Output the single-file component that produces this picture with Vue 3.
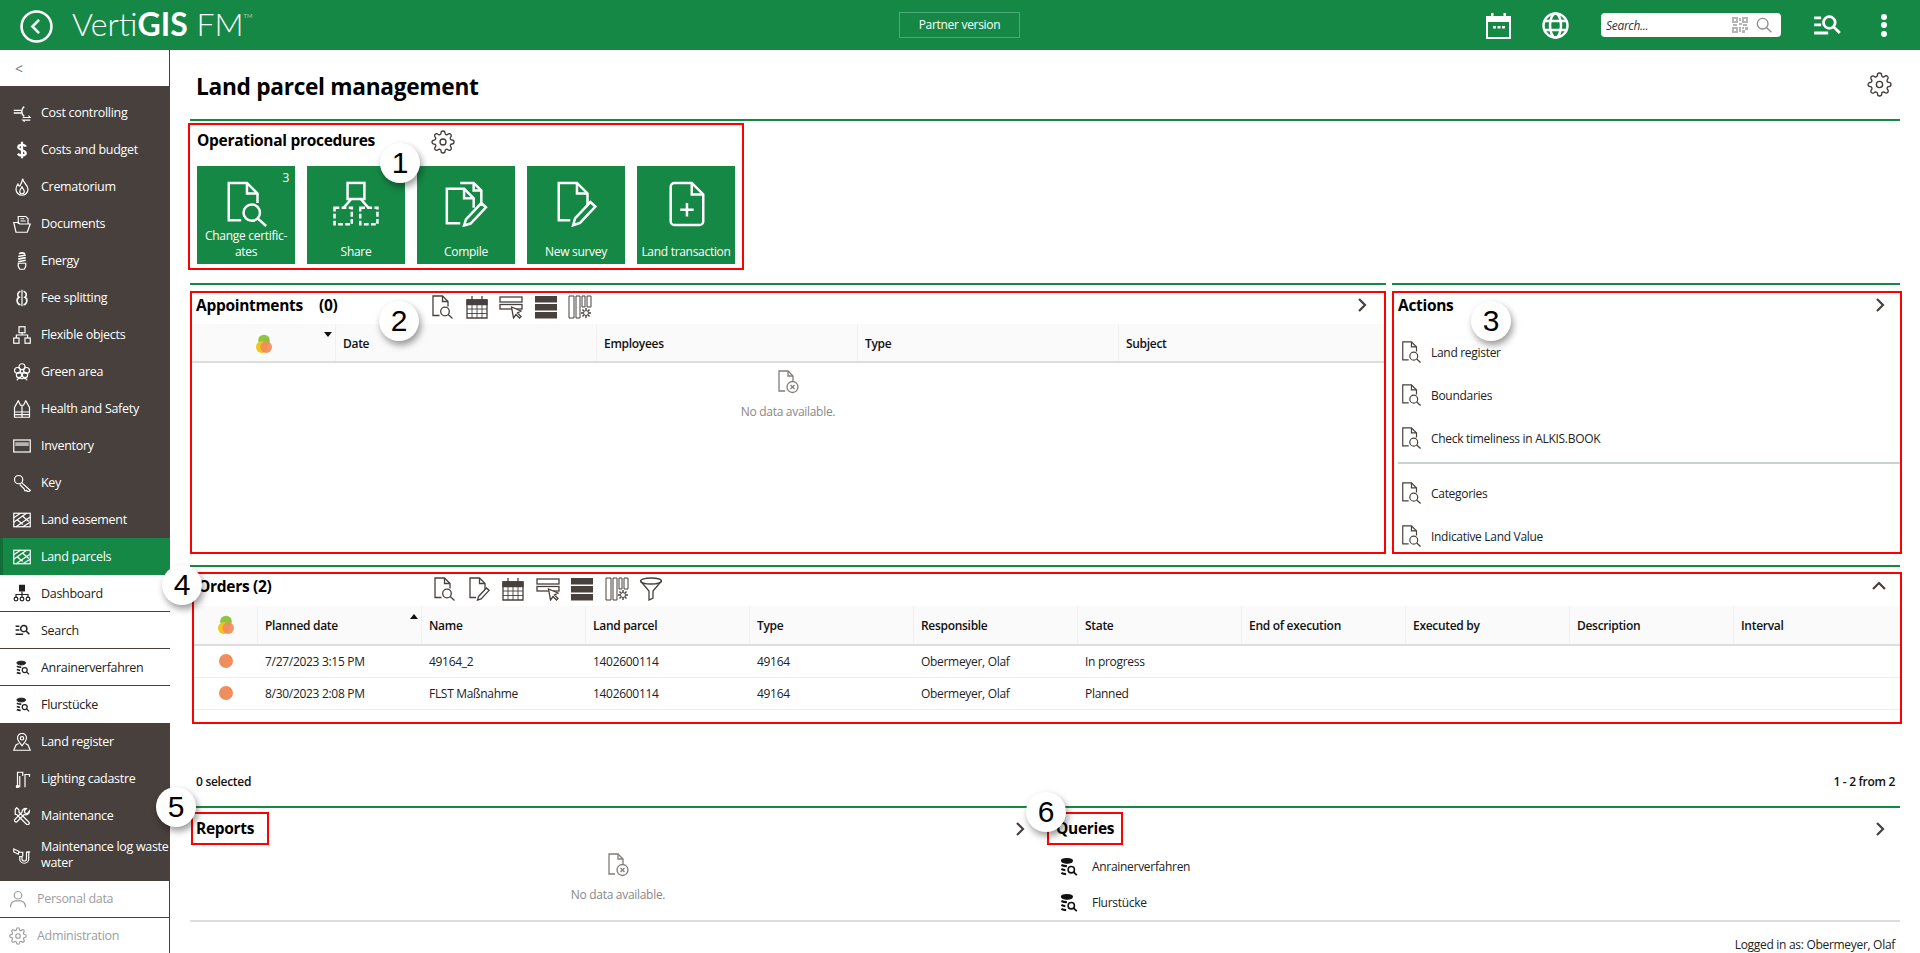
<template>
  <div class="app">
    <svg class="sprite" xmlns="http://www.w3.org/2000/svg">
      <symbol id="i-gear" viewBox="0 0 24 24">
        <circle cx="12" cy="12" r="3" />
        <path d="M19.4 15a1.65 1.65 0 0 0 .33 1.82l.06.06a2 2 0 0 1 0 2.83 2 2 0 0 1-2.83 0l-.06-.06a1.65 1.65 0 0 0-1.82-.33 1.65 1.65 0 0 0-1 1.51V21a2 2 0 0 1-2 2 2 2 0 0 1-2-2v-.09A1.65 1.65 0 0 0 9 19.4a1.65 1.65 0 0 0-1.82.33l-.06.06a2 2 0 0 1-2.83 0 2 2 0 0 1 0-2.83l.06-.06a1.65 1.65 0 0 0 .33-1.82 1.65 1.65 0 0 0-1.51-1H3a2 2 0 0 1-2-2 2 2 0 0 1 2-2h.09A1.65 1.65 0 0 0 4.6 9a1.65 1.65 0 0 0-.33-1.82l-.06-.06a2 2 0 0 1 0-2.83 2 2 0 0 1 2.83 0l.06.06a1.65 1.65 0 0 0 1.82.33H9a1.65 1.65 0 0 0 1-1.51V3a2 2 0 0 1 2-2 2 2 0 0 1 2 2v.09a1.65 1.65 0 0 0 1 1.51 1.65 1.65 0 0 0 1.82-.33l.06-.06a2 2 0 0 1 2.83 0 2 2 0 0 1 0 2.83l-.06.06a1.65 1.65 0 0 0-.33 1.82V9a1.65 1.65 0 0 0 1.51 1H21a2 2 0 0 1 2 2 2 2 0 0 1-2 2h-.09a1.65 1.65 0 0 0-1.51 1z" />
      </symbol>
      <symbol id="i-docsearch" viewBox="0 0 24 24">
        <path d="M9.5 20.5H3V1h9.5l5.5 5.5v5" />
        <path d="M12.5 1v5.5H18" />
        <circle cx="15" cy="16.5" r="4.3" />
        <path d="M18.2 19.6l4.3 3.9" />
      </symbol>
      <symbol id="i-docedit" viewBox="0 0 24 24">
        <path d="M9 20.5H3V1h9.5L18 6.5v6" />
        <path d="M12.5 1v5.5H18" />
        <path d="M11.5 19.5l8-8.5 2.6 2.4-8 8.5-3.6 1.2z" />
      </symbol>
      <symbol id="i-share" viewBox="0 0 24 24">
        <rect x="7.6" y="1" width="8.8" height="8.4" />
        <path d="M9.5 9.400l-4 4.600M14.500 9.400l4 4.600" />
        <rect x="0.8" y="14" width="9" height="8.6" stroke-dasharray="2.5 1.2" />
        <rect x="14.200" y="14" width="9" height="8.6" stroke-dasharray="2.5 1.2" />
      </symbol>
      <symbol id="i-compile" viewBox="0 0 24 24">
        <path d="M9 1h7l4 4v8" />
        <path d="M16 1v4h4" />
        <path d="M9 22H2V4h9l5 5v5" />
        <path d="M11 4v5h5" />
        <path d="M12 20l8-8.5 2.4 2.2-8 8.5-3.4 1z" />
      </symbol>
      <symbol id="i-docplus" viewBox="0 0 24 24">
        <path d="M6 1h9l6 6v14a2 2 0 0 1-2 2H6a2 2 0 0 1-2-2V3a2 2 0 0 1 2-2z" />
        <path d="M15 1v6h6" />
        <path d="M12.5 11.5v7M9 15h7" />
      </symbol>
      <symbol id="i-calendar" viewBox="0 0 24 24">
        <path d="M2 5h20v18H2z" />
        <path d="M7 1v5M17 1v5" />
        <path d="M2 9.5h20M2 14h20M2 18.5h20M7 9.5V23M12 9.5V23M17 9.5V23" stroke-width=".9" />
        <path d="M2 5h20v4.5H2z" fill="currentColor" />
      </symbol>
      <symbol id="i-pick" viewBox="0 0 24 24">
        <rect x="1" y="2" width="22" height="5" />
        <rect x="1" y="9.5" width="22" height="4.5" />
        <path d="M12.5 12l2 11 2.5-3.5 3.5 3.5 1.5-1.5-3.5-3.5 3.5-2z" fill="#fff" />
      </symbol>
      <symbol id="i-rows" viewBox="0 0 24 24">
        <path d="M1 1h22v6.5H1zM1 9h22v6.5H1zM1 17h22v6.5H1z" fill="currentColor" stroke="none" />
      </symbol>
      <symbol id="i-cols" viewBox="0 0 24 24">
        <path d="M1 1h5v22H1zM8 1h4v22H8zM14 1h3v11h-3zM19 1h4v11h-4z" stroke-width="1" />
        <circle cx="18" cy="18" r="2.5" stroke-width="1" />
        <path d="M18 13v2M18 21v2M13 18h2M21 18h2M14.500 14.500l1.400 1.400M20.100 20.100l1.400 1.400M14.500 21.500l1.400-1.400M20.100 15.900l1.400-1.400" stroke-width="1.400" />
      </symbol>
      <symbol id="i-funnel" viewBox="0 0 24 24">
        <ellipse cx="12" cy="4" rx="10.500" ry="3" />
        <path d="M1.500 4L10 14v9l4-2v-7l8.500-10" />
      </symbol>
      <symbol id="i-nodata" viewBox="0 0 24 24">
        <path d="M9 21H3V1h9l5 5v6" />
        <path d="M12 1v5h5" />
        <circle cx="16.500" cy="17" r="5.500" />
        <path d="M14.500 15l4 4M18.500 15l-4 4" />
      </symbol>
      <symbol id="i-cost" viewBox="0 0 24 24">
        <path d="M15 3.500a8 8 0 0 0 0 13M1 8.500h10M1 12h10" stroke-width="1.900" />
        <path d="M13 18h10l-2.500-2.500M23 21.500H13l2.500 2" stroke-width="1.400" />
      </symbol>
      <symbol id="i-dollar" viewBox="0 0 24 24">
        <path d="M17 7.500c-1-3-9.500-3.500-10 .5s10 4 10 8-8 4.500-10.500 1M12 1v22" stroke-width="3" />
      </symbol>
      <symbol id="i-flame" viewBox="0 0 24 24">
        <path d="M13 1c0 5 7 8 7 14a8 8 0 0 1-16 0c0-3 1-5 2.500-7 .5 2 1.500 3 2.500 3 1.500-2.500 3-5.500 4-10z" />
        <path d="M12 11c0 3 3 4 3 7a3 3 0 0 1-6 0c0-3 2.500-4 3-7z" />
      </symbol>
      <symbol id="i-box" viewBox="0 0 24 24">
        <path d="M7 12V2h10l3 3v7" />
        <path d="M10 5h5M10 8h7" />
        <path d="M1 10l3 13h15l4-11H9l-2-2z" />
      </symbol>
      <symbol id="i-bulb" viewBox="0 0 24 24">
        <path d="M8 2.500c3-2 5-2 8 0M7 6l10-2M7 9.500l10-2M7 13l10-2" stroke-width="2.200" />
        <path d="M7 15h10v4l-2 4h-6l-2-4z" />
      </symbol>
      <symbol id="i-fee" viewBox="0 0 24 24">
        <path d="M12 1v22" />
        <path d="M10 3C6 4 5 9 8 11c-4 2-3 9 2 10M14 3c4 1 5 6 2 8 4 2 3 9-2 10" stroke-width="2.200" />
      </symbol>
      <symbol id="i-flex" viewBox="0 0 24 24">
        <rect x="8" y="1" width="8" height="8" />
        <path d="M12 9v3M4.500 16v-4h15v4" />
        <rect x="1" y="16" width="7" height="7" />
        <rect x="16" y="16" width="7" height="7" />
      </symbol>
      <symbol id="i-flower" viewBox="0 0 24 24">
        <circle cx="12" cy="11" r="2.500" />
        <circle cx="12" cy="5" r="4" />
        <circle cx="6" cy="10" r="4" />
        <circle cx="18" cy="10" r="4" />
        <circle cx="8" cy="16" r="3.500" />
        <circle cx="16" cy="16" r="3.500" />
        <path d="M5 23c2-3 5-3 7-2 2-1 5-1 7 2" />
      </symbol>
      <symbol id="i-vest" viewBox="0 0 24 24">
        <path d="M7 1L2 10v13h20V10L17 1l-3 6h-4z" />
        <path d="M12 7v16M2 16h20M2 19.500h20" />
      </symbol>
      <symbol id="i-inventory" viewBox="0 0 24 24">
        <rect x="1" y="4" width="22" height="16" />
        <path d="M3 7h18v5H3z" fill="currentColor" opacity=".6" stroke="none" />
      </symbol>
      <symbol id="i-key" viewBox="0 0 24 24">
        <circle cx="7.500" cy="7.500" r="5.500" />
        <path d="M11.500 11.500L23 22l-3 2-2-2-2 .5-1-2.500-6-6" />
      </symbol>
      <symbol id="i-land" viewBox="0 0 24 24">
        <rect x="1" y="3" width="22" height="18" />
        <path d="M1 9l9-6M1 15L18 3M4 21L23 8M13 21l10-6M6 12l7 6M13 7l8 7" />
      </symbol>
      <symbol id="i-dash" viewBox="0 0 24 24">
        <path d="M8 1h8v9H8z" fill="currentColor" stroke="none" />
        <path d="M12 10v4M4 18v-4h16v4M12 14v4" />
        <circle cx="4" cy="20" r="2.500" />
        <circle cx="12" cy="20" r="2.500" />
        <circle cx="20" cy="20" r="2.500" />
      </symbol>
      <symbol id="i-listsearch" viewBox="0 0 24 24">
        <path d="M1 5h6M1 11h6M1 18h12" stroke-width="2.400" />
        <circle cx="14" cy="9" r="5" stroke-width="2.400" />
        <path d="M18 13l5 5" stroke-width="2.400" />
      </symbol>
      <symbol id="i-query" viewBox="0 0 24 24">
        <path d="M3 4.500C3 1 17 1 17 4.500 17 9 3 9 3 4.500z" fill="currentColor" stroke="currentColor" />
        <path d="M3 10c2 1 5 1.500 7 1.500M3 15c1.500 1 3.500 1.500 5 1.500M3 20c1.500 1 3.500 1.500 6 1.500" stroke-width="2.800" />
        <circle cx="15.500" cy="16" r="4" stroke-width="2" />
        <path d="M18.500 19l4 4" stroke-width="2.200" />
      </symbol>
      <symbol id="i-register" viewBox="0 0 24 24">
        <path d="M12 17c-3-4-6-7-6-10.500a6 6 0 0 1 12 0c0 3.500-3 6.500-6 10.500z" />
        <circle cx="12" cy="7" r="2.300" />
        <path d="M7.500 14L4 16l-3 7h22l-3-7-3.500-2" />
      </symbol>
      <symbol id="i-lamp" viewBox="0 0 24 24">
        <path d="M6 23V3h7v5M16 23V6h6v3M9 23V8" />
        <circle cx="6" cy="22" r="1.500" />
      </symbol>
      <symbol id="i-tools" viewBox="0 0 24 24">
        <path d="M3 3l2-2 3 3v3l13 13a2 2 0 0 1-3 3L5 10H3z" />
        <path d="M22 5a5 5 0 0 1-7 5L5 20a2.500 2.500 0 0 1-3-3l10-10a5 5 0 0 1 6-5l-3 3 1 3 3 1z" />
      </symbol>
      <symbol id="i-pipe" viewBox="0 0 24 24">
        <path d="M1 4l7 3-1 4-6-3zM21 8v9a6 6 0 0 1-12 0v-3h3v3a3 3 0 0 0 6 0V8zM8 8l5 .5v5" />
        <path d="M19 8h4" />
      </symbol>
      <symbol id="i-person" viewBox="0 0 24 24">
        <circle cx="12" cy="7" r="5" />
        <path d="M2 23c0-6 4-8 6-8.500h8c2 .5 6 2.500 6 8.500" />
      </symbol>
      <symbol id="i-searchmag" viewBox="0 0 24 24">
        <circle cx="10" cy="10" r="8" />
        <path d="M16 16l7 7" />
      </symbol>
    </svg>

    <header class="topbar">
      <div class="brand">
        <svg class="back" viewBox="0 0 32 32">
          <circle cx="16" cy="16" r="14.5" />
          <path d="M18.5 9.500L12 16l6.500 6.500" />
        </svg>
        <span class="logo">Verti<b>GIS</b> FM<sup>TM</sup></span>
      </div>
      <div class="partner">Partner version</div>
      <div class="top-tools">
        <svg class="top-cal" viewBox="0 0 25 27">
          <path d="M1 5h23v21H1z" fill="none" stroke="#fff" stroke-width="2" />
          <path d="M1 5h23v5H1zM5 1h2.500v5H5zM17.500 1H20v5h-2.500zM7 14h3v2.500H7zM11.500 14h3v2.500h-3zM16 14h3v2.500h-3z" fill="#fff" />
        </svg>
        <svg class="top-globe" viewBox="0 0 27 27">
          <circle cx="13.5" cy="13.5" r="12" />
          <ellipse cx="13.5" cy="13.5" rx="5.5" ry="12" />
          <path d="M2.500 9h22M2.500 18h22" />
        </svg>
        <div class="searchbox">
          <span>Search...</span>
          <svg class="qr" viewBox="0 0 16 16">
            <path d="M0 0h6v6H0zM10 0h6v6h-6zM0 10h6v6H0z" fill="#b5b5b5" />
            <path d="M2 2h2v2H2zM12 2h2v2h-2zM2 12h2v2H2z" fill="#fff" />
            <path d="M7 1h2v3H7zM7 6h3v2H7zM1 7h4v2H1zM11 7h4v2h-4zM7 10h2v5H7zM10 10h2v2h-2zM13 10h3v3h-3zM10 13h3v3h-3z" fill="#b5b5b5" />
          </svg>
          <svg class="ic mag"><use href="#i-searchmag" /></svg>
        </div>
        <svg class="ic top-list"><use href="#i-listsearch" /></svg>
        <div class="kebab"><i></i><i></i><i></i></div>
      </div>
    </header>

    <div class="body">
      <aside class="sidebar">
        <div class="collapse">&lt;</div>
        <div class="nav">
          <div v-for="item in navItems" :key="item.label" class="nav-item" :class="item.kind">
            <span class="nav-icon-box">
              <svg class="ic nav-ic" :class="'nav-' + item.icon"><use :href="'#i-' + item.icon" /></svg>
            </span>
            <span>{{ item.label }}</span>
          </div>
        </div>
        <div v-for="item in bottomNav" :key="item.label" class="nav-bottom">
          <svg class="ic nav-ic"><use :href="'#i-' + item.icon" /></svg>
          <span>{{ item.label }}</span>
        </div>
      </aside>

      <main class="content">
        <div class="title-row">
          <h1>Land parcel management</h1>
          <svg class="ic gear-big"><use href="#i-gear" /></svg>
        </div>
        <div class="green-line"></div>

        <section class="red procedures">
          <div class="proc-head">
            <h2>Operational procedures</h2>
            <svg class="ic gear"><use href="#i-gear" /></svg>
          </div>
          <div class="tiles">
            <div v-for="tile in tiles" :key="tile.label" class="tile">
              <span v-if="tile.count" class="count">{{ tile.count }}</span>
              <svg class="ic tile-ic"><use :href="'#i-' + tile.icon" /></svg>
              <div class="tile-label">{{ tile.label }}</div>
            </div>
          </div>
          <div class="badge b1">1</div>
        </section>

        <div class="two-col">
          <div class="col-left">
            <div class="green-line"></div>
            <section class="red appointments">
              <div class="sec-head">
                <h2 class="sec-title">Appointments<span class="num">(0)</span></h2>
                <div class="toolbar">
                  <svg v-for="t in apptTools" :key="t" class="ic tool"><use :href="'#i-' + t" /></svg>
                </div>
                <svg class="chev" viewBox="0 0 10 16"><path d="M2 2l6 6-6 6" /></svg>
              </div>
              <div class="grid appt-grid grid-head">
                <div class="cell center">
                  <svg class="traffic" viewBox="0 0 18 22">
                    <circle cx="9" cy="7" r="6.5" fill="#8fc442" />
                    <circle cx="6.5" cy="14.5" r="6.5" fill="#f3c322" />
                    <circle cx="11.5" cy="14.5" r="6.5" fill="#ef8d5c" opacity=".92" />
                  </svg>
                  <i class="sort down"></i>
                </div>
                <div v-for="h in apptCols" :key="h" class="cell">{{ h }}</div>
              </div>
              <div class="nodata appt-empty">
                <svg class="ic nodata-ic"><use href="#i-nodata" /></svg>
                <span>No data available.</span>
              </div>
              <div class="badge b2">2</div>
            </section>
          </div>
          <div class="col-right">
            <div class="green-line"></div>
            <section class="red actions">
              <div class="sec-head">
                <h2 class="act-title">Actions</h2>
                <svg class="chev" viewBox="0 0 10 16"><path d="M2 2l6 6-6 6" /></svg>
              </div>
              <div class="act-list first">
                <div v-for="a in actionsTop" :key="a" class="act-row">
                  <svg class="ic act-ic"><use href="#i-docsearch" /></svg>
                  <span>{{ a }}</span>
                </div>
              </div>
              <div class="act-divider"></div>
              <div class="act-list">
                <div v-for="a in actionsBottom" :key="a" class="act-row">
                  <svg class="ic act-ic"><use href="#i-docsearch" /></svg>
                  <span>{{ a }}</span>
                </div>
              </div>
              <div class="badge b3">3</div>
            </section>
          </div>
        </div>

        <div class="green-line orders-line"></div>
        <section class="red orders">
          <div class="sec-head">
            <h2 class="sec-title">Orders (2)</h2>
            <div class="toolbar">
              <svg v-for="t in orderTools" :key="t" class="ic tool"><use :href="'#i-' + t" /></svg>
            </div>
            <svg class="chev up" viewBox="0 0 16 10"><path d="M2 8l6-6 6 6" /></svg>
          </div>
          <div class="grid order-grid grid-head">
            <div class="cell center">
              <svg class="traffic" viewBox="0 0 18 22">
                <circle cx="9" cy="7" r="6.5" fill="#8fc442" />
                <circle cx="6.5" cy="14.5" r="6.5" fill="#f3c322" />
                <circle cx="11.5" cy="14.5" r="6.5" fill="#ef8d5c" opacity=".92" />
              </svg>
            </div>
            <div v-for="(h, i) in orderCols" :key="h" class="cell">
              {{ h }}<i v-if="i === 0" class="sort"></i>
            </div>
          </div>
          <div v-for="row in orders" :key="row.name" class="grid order-grid order-row">
            <div class="cell center"><span class="dot"></span></div>
            <div class="cell">{{ row.date }}</div>
            <div class="cell">{{ row.name }}</div>
            <div class="cell">{{ row.parcel }}</div>
            <div class="cell">{{ row.type }}</div>
            <div class="cell">{{ row.resp }}</div>
            <div class="cell">{{ row.state }}</div>
            <div class="cell"></div>
            <div class="cell"></div>
            <div class="cell"></div>
            <div class="cell"></div>
          </div>
          <div class="badge b4">4</div>
        </section>

        <div class="selected-row">
          <span>0 selected</span>
          <span class="paging">1 - 2 from 2</span>
        </div>
        <div class="green-line"></div>

        <div class="bottom-row">
          <section class="reports">
            <div class="bottom-head">
              <h2 class="red mini">Reports</h2>
              <svg class="chev" viewBox="0 0 10 16"><path d="M2 2l6 6-6 6" /></svg>
            </div>
            <div class="nodata reports-empty">
              <svg class="ic nodata-ic"><use href="#i-nodata" /></svg>
              <span>No data available.</span>
            </div>
            <div class="badge b5">5</div>
          </section>
          <section class="queries">
            <div class="bottom-head">
              <h2 class="red mini">Queries</h2>
              <svg class="chev" viewBox="0 0 10 16"><path d="M2 2l6 6-6 6" /></svg>
            </div>
            <div v-for="q in queries" :key="q" class="query-row">
              <svg class="ic query-ic"><use href="#i-query" /></svg>
              <span>{{ q }}</span>
            </div>
            <div class="badge b6">6</div>
          </section>
        </div>
        <div class="grey-line"></div>
        <div class="logged">Logged in as: Obermeyer, Olaf</div>
      </main>
    </div>
  </div>
</template>

<script setup>
const navItems = [
  { label: "Cost controlling", icon: "cost", kind: "dark" },
  { label: "Costs and budget", icon: "dollar", kind: "dark" },
  { label: "Crematorium", icon: "flame", kind: "dark" },
  { label: "Documents", icon: "box", kind: "dark" },
  { label: "Energy", icon: "bulb", kind: "dark" },
  { label: "Fee splitting", icon: "fee", kind: "dark" },
  { label: "Flexible objects", icon: "flex", kind: "dark" },
  { label: "Green area", icon: "flower", kind: "dark" },
  { label: "Health and Safety", icon: "vest", kind: "dark" },
  { label: "Inventory", icon: "inventory", kind: "dark" },
  { label: "Key", icon: "key", kind: "dark" },
  { label: "Land easement", icon: "land", kind: "dark" },
  { label: "Land parcels", icon: "land", kind: "active" },
  { label: "Dashboard", icon: "dash", kind: "light" },
  { label: "Search", icon: "listsearch", kind: "light" },
  { label: "Anrainerverfahren", icon: "query", kind: "light" },
  { label: "Flurstücke", icon: "query", kind: "light last" },
  { label: "Land register", icon: "register", kind: "dark" },
  { label: "Lighting cadastre", icon: "lamp", kind: "dark" },
  { label: "Maintenance", icon: "tools", kind: "dark" },
  { label: "Maintenance log waste water", icon: "pipe", kind: "dark tall" }
];

const bottomNav = [
  { label: "Personal data", icon: "person" },
  { label: "Administration", icon: "gear" }
];

const tiles = [
  { label: "Change certific- ates", icon: "docsearch", count: 3 },
  { label: "Share", icon: "share" },
  { label: "Compile", icon: "compile" },
  { label: "New survey", icon: "docedit" },
  { label: "Land transaction", icon: "docplus" }
];

const apptTools = ["docsearch", "calendar", "pick", "rows", "cols"];
const orderTools = ["docsearch", "docedit", "calendar", "pick", "rows", "cols", "funnel"];
const apptCols = ["Date", "Employees", "Type", "Subject"];
const orderCols = [
  "Planned date",
  "Name",
  "Land parcel",
  "Type",
  "Responsible",
  "State",
  "End of execution",
  "Executed by",
  "Description",
  "Interval"
];
const orders = [
  { date: "7/27/2023 3:15 PM", name: "49164_2", parcel: "1402600114", type: "49164", resp: "Obermeyer, Olaf", state: "In progress" },
  { date: "8/30/2023 2:08 PM", name: "FLST Maßnahme", parcel: "1402600114", type: "49164", resp: "Obermeyer, Olaf", state: "Planned" }
];
const actionsTop = ["Land register", "Boundaries", "Check timeliness in ALKIS.BOOK"];
const actionsBottom = ["Categories", "Indicative Land Value"];
const queries = ["Anrainerverfahren", "Flurstücke"];
</script>

<style>
html, body {
  margin: 0;
  background: #fff;
}
</style>

<style scoped>
.app {
  width: 1920px;
  height: 953px;
  overflow: hidden;
  font-family: "Open Sans", "Noto Sans", sans-serif;
  font-size: 12px;
  letter-spacing: -0.3px;
  color: #222;
  background: #fff;
}
.sprite {
  display: none;
}
.ic {
  fill: none;
  stroke: currentColor;
  stroke-width: 1.3;
  flex: none;
}

.topbar {
  height: 50px;
  background: #168845;
  color: #fff;
  display: flex;
  align-items: center;
  position: relative;
}
.brand {
  display: flex;
  align-items: center;
  width: 899px;
  padding-left: 20px;
  box-sizing: border-box;
}
.back {
  width: 33px;
  height: 33px;
  fill: none;
  stroke: #fff;
  stroke-width: 2.5;
  margin-top: 2px;
}
.logo {
  font-family: "Lato", sans-serif;
  font-weight: 300;
  font-size: 32px;
  letter-spacing: 0;
  margin-left: 19px;
  margin-top: -4px;
  white-space: nowrap;
}
.logo b {
  font-weight: 700;
}
.logo sup {
  font-size: 6px;
  vertical-align: 18px;
  line-height: 0;
}
.partner {
  width: 121px;
  height: 26px;
  line-height: 24px;
  box-sizing: border-box;
  border: 1px solid #4aa878;
  text-align: center;
  font-size: 12px;
}
.top-tools {
  display: flex;
  align-items: center;
  margin-left: 466px;
}
.top-cal {
  width: 25px;
  height: 27px;
}
.top-globe {
  width: 27px;
  height: 27px;
  margin-left: 31px;
  fill: none;
  stroke: #fff;
  stroke-width: 2.5;
}
.searchbox {
  width: 180px;
  height: 24px;
  margin-left: 32px;
  background: #fff;
  border-radius: 4px;
  display: flex;
  align-items: center;
  color: #333;
  font-style: italic;
  font-size: 12px;
  padding-left: 5px;
  box-sizing: border-box;
}
.searchbox span {
  flex: 1;
}
.qr {
  width: 16px;
  height: 16px;
}
.mag {
  width: 16px;
  height: 16px;
  margin: 0 9px 0 8px;
  color: #8c8c8c;
  stroke-width: 2;
}
.top-list {
  width: 28px;
  height: 28px;
  margin-left: 32px;
  margin-top: 2px;
}
.kebab {
  display: flex;
  flex-direction: column;
  gap: 2.5px;
  margin-left: 40px;
}
.kebab i {
  width: 6px;
  height: 6px;
  border-radius: 50%;
  background: #fff;
}

.body {
  display: flex;
  height: 903px;
}
.sidebar {
  width: 170px;
  flex: none;
  box-sizing: border-box;
  border-right: 1px solid #47403c;
}
.collapse {
  height: 36px;
  line-height: 38px;
  padding-left: 15px;
  color: #777;
  font-size: 14px;
}
.nav {
  background: #47403c;
  padding-top: 8px;
  margin-right: -1px;
}
.nav-item {
  height: 37px;
  display: flex;
  align-items: center;
  gap: 10px;
  padding-left: 13px;
  box-sizing: border-box;
  color: #fff;
  font-size: 12.5px;
}
.nav-item.tall {
  height: 47px;
  line-height: 16px;
  padding-bottom: 6px;
}
.nav-item.active {
  background: #168845;
  border-left: 3px solid #0f6f37;
  padding-left: 10px;
}
.nav-item.light {
  background: #fff;
  color: #222;
  border-bottom: 1px solid #47403c;
}
.nav-item.light.last {
  border-bottom: none;
}
.nav-icon-box {
  width: 18px;
  height: 18px;
  flex: none;
  display: flex;
  align-items: center;
  justify-content: center;
}
.nav-ic {
  width: 18px;
  height: 18px;
  stroke-width: 1.6;
}
.nav-ic.nav-listsearch {
  width: 15px;
  height: 15px;
}
.nav-ic.nav-query {
  width: 15px;
  height: 15px;
}
.nav-bottom {
  height: 36.5px;
  display: flex;
  align-items: center;
  gap: 10px;
  padding-left: 9px;
  box-sizing: border-box;
  color: #9d9d9d;
  font-size: 12.5px;
  border-bottom: 1px solid #47403c;
}
.nav-bottom:last-child {
  border-bottom: none;
}
.nav-bottom .nav-ic {
  width: 18px;
  height: 18px;
}

.content {
  flex: 1;
  padding: 0 20px;
  min-width: 0;
}
.title-row {
  height: 69px;
  display: flex;
  align-items: center;
  justify-content: space-between;
  padding-left: 6px;
}
h1 {
  margin: 0 0 -3px;
  font-size: 22.7px;
  font-weight: 700;
  color: #000;
}
h2 {
  margin: 0;
  font-size: 15.5px;
  font-weight: 700;
  color: #000;
}
.gear-big {
  width: 25px;
  height: 25px;
  margin: 0 8px 0 0;
  color: #3f3a37;
}
.green-line {
  height: 2px;
  background: #168845;
}
.red {
  border: 2px solid #f00;
  box-sizing: border-box;
  position: relative;
}
.procedures {
  width: 556px;
  height: 147px;
  margin: 2px 0 13px -2px;
}
.proc-head {
  height: 41px;
  display: flex;
  align-items: center;
}
.proc-head h2 {
  width: 241px;
  padding-left: 7px;
  box-sizing: border-box;
  margin-top: -11px;
}
.gear {
  width: 24px;
  height: 24px;
  color: #3f3a37;
  margin-top: -8px;
}
.tiles {
  display: flex;
  gap: 12px;
  padding-left: 7px;
}
.tile {
  width: 98px;
  height: 98px;
  background: #168845;
  color: #fff;
  position: relative;
  display: flex;
  flex-direction: column;
  align-items: center;
  padding: 15px 0 4px;
  box-sizing: border-box;
}
.count {
  position: absolute;
  top: 3px;
  right: 6px;
  font-size: 12px;
}
.tile-ic {
  width: 46px;
  height: 46px;
}
.tile-label {
  margin-top: auto;
  line-height: 16px;
  text-align: center;
  font-size: 12px;
  width: 92px;
}

.two-col {
  display: flex;
  gap: 6px;
}
.col-left {
  width: 1196px;
  flex: none;
}
.col-right {
  flex: 1;
  min-width: 0;
}
.appointments,
.actions {
  height: 263px;
  margin-top: 6px;
}
.actions {
  margin-right: -2px;
}
.sec-head {
  display: flex;
  align-items: center;
  height: 31px;
  padding-bottom: 8px;
  box-sizing: border-box;
}
.sec-title {
  width: 238px;
  flex: none;
  padding-left: 4px;
  box-sizing: border-box;
}
.num {
  margin-left: 16px;
}
.act-title {
  padding-left: 4px;
  flex: 1;
}
.toolbar {
  display: flex;
  gap: 10.5px;
  flex: 1;
  color: #47403c;
  margin-top: 5px;
}
.tool {
  width: 24px;
  height: 24px;
}
.chev {
  width: 10px;
  height: 16px;
  fill: none;
  stroke: #47403c;
  stroke-width: 2.2;
  margin-right: 17px;
  flex: none;
}
.actions .chev {
  margin-right: 15px;
}
.chev.up {
  width: 16px;
  height: 10px;
  margin-right: 13px;
}
.grid {
  display: grid;
}
.appt-grid {
  grid-template-columns: 143px 261px 261px 261px 1fr;
}
.order-grid {
  grid-template-columns: 63px repeat(9, 164px) 1fr;
}
.grid-head {
  background: #fafafa;
  border-bottom: 2px solid #ddd;
  font-weight: 600;
  color: #111;
}
.appt-grid.grid-head {
  height: 37px;
}
.order-grid.grid-head {
  height: 38px;
}
.cell {
  display: flex;
  align-items: center;
  padding-left: 7px;
  position: relative;
  border-left: 1px solid #f0f0f0;
  white-space: nowrap;
}
.grid-head .cell:first-child {
  border-left: none;
}
.appt-grid .cell {
  padding-top: 2px;
}
.cell.center {
  justify-content: center;
  padding-left: 0;
}
.traffic {
  width: 16px;
  height: 20px;
}
.sort {
  position: absolute;
  right: 3px;
  top: 8px;
  width: 0;
  height: 0;
  border-left: 4px solid transparent;
  border-right: 4px solid transparent;
  border-bottom: 5px solid #111;
}
.sort.down {
  border-bottom: none;
  border-top: 5px solid #111;
}
.order-row {
  height: 32px;
  border-bottom: 1px solid #eee;
  box-sizing: border-box;
}
.order-row .cell {
  border-left: none;
  padding-left: 8px;
  padding-bottom: 1px;
}
.order-row .cell.center {
  padding-left: 0;
}
.dot {
  width: 14px;
  height: 14px;
  border-radius: 50%;
  background: #f08d5c;
}
.nodata {
  display: flex;
  flex-direction: column;
  align-items: center;
  color: #888;
}
.nodata-ic {
  width: 24px;
  height: 24px;
  color: #807c7a;
}
.nodata span {
  margin-top: 9px;
}
.appt-empty {
  padding: 7px 0 0 0;
  width: 1192px;
}

.act-list {
  display: flex;
  flex-direction: column;
  gap: 11px;
}
.act-list.first {
  margin-top: 12px;
}
.act-row {
  height: 32px;
  display: flex;
  align-items: center;
  gap: 9px;
  padding-left: 6px;
}
.act-ic {
  width: 22px;
  height: 24px;
  color: #47403c;
}
.act-divider {
  height: 2px;
  background: #c9d1d1;
  margin: 8px 0 13px 4px;
}

.orders-line {
  margin-top: 11px;
}
.orders {
  height: 152px;
  margin: 5px -2px 0 2px;
}
.orders .sec-head {
  height: 32px;
}

.selected-row {
  display: flex;
  justify-content: space-between;
  font-weight: 600;
  color: #111;
  line-height: 16px;
  margin: 50px 0 16px;
  padding: 0 5px 0 6px;
}
.bottom-row {
  display: flex;
  gap: 7px;
  height: 112px;
}
.reports {
  width: 850px;
  flex: none;
  position: relative;
}
.queries {
  flex: 1;
  position: relative;
}
.bottom-head {
  display: flex;
  justify-content: space-between;
  align-items: center;
  margin-top: 4px;
}
.mini {
  height: 33px;
  line-height: 28px;
  padding: 0 3px;
  margin-left: 1px;
}
.reports .mini {
  width: 78px;
}
.queries .mini {
  width: 76px;
  margin-left: 0;
  padding-left: 7px;
}
.bottom-head .chev {
  margin-right: 15px;
}
.reports-empty {
  margin-top: 8px;
  padding-left: 6px;
}
.query-row {
  display: flex;
  align-items: center;
  gap: 14px;
  padding-left: 12px;
  height: 36px;
}
.queries .bottom-head + .query-row {
  margin-top: 3px;
}
.query-ic {
  width: 19px;
  height: 19px;
  color: #111;
}
.grey-line {
  height: 2px;
  background: #ddd;
}
.logged {
  text-align: right;
  padding-right: 5px;
  margin-top: 15px;
  line-height: 16px;
}

.badge {
  position: absolute;
  width: 40px;
  height: 40px;
  border-radius: 50%;
  background: #fff;
  box-shadow: 2px 4px 7px rgba(0, 0, 0, 0.4);
  display: flex;
  align-items: center;
  justify-content: center;
  font-family: "Liberation Sans", sans-serif;
  font-size: 30px;
  letter-spacing: 0;
  color: #000;
  z-index: 5;
}
.b1 {
  left: 190px;
  top: 18px;
}
.b2 {
  left: 187px;
  top: 8px;
}
.b3 {
  left: 77px;
  top: 8px;
}
.b4 {
  left: -32px;
  top: -9px;
}
.b5 {
  left: -34px;
  top: -21px;
}
.b6 {
  left: -21px;
  top: -16px;
}
</style>
